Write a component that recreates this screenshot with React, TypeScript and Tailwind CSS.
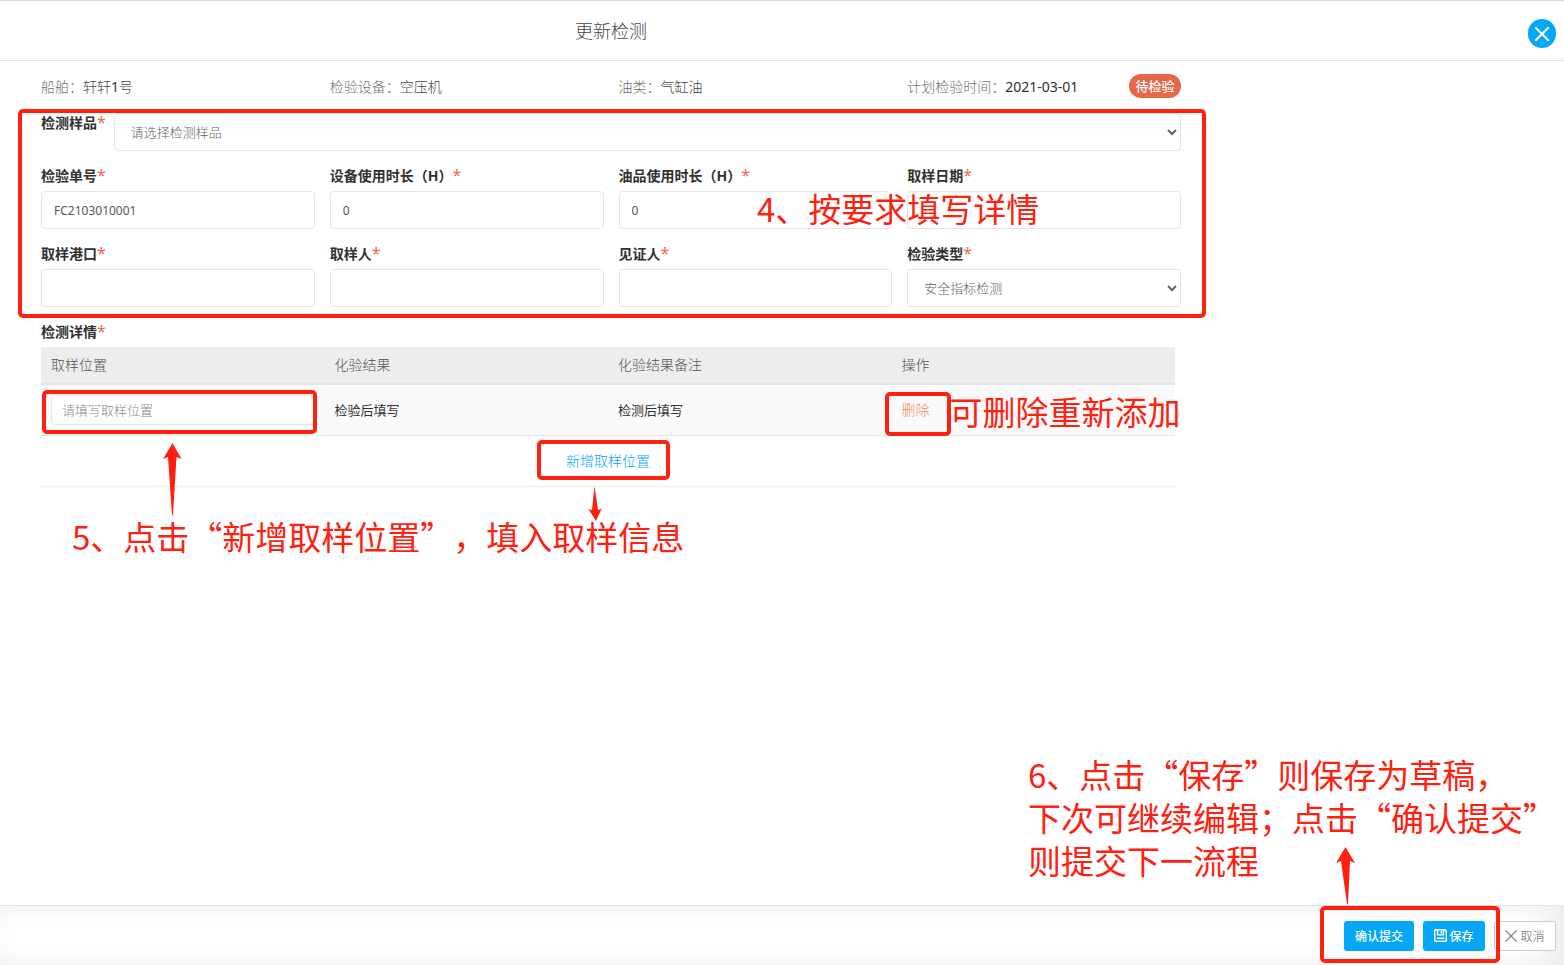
import type { ReactNode } from "react";

const RED = "#ff2010";

function Star() {
  return <span className="text-base leading-none font-normal text-[#e9694a]">*</span>;
}

function Info({ label, value }: { label: string; value: ReactNode }) {
  return (
    <div className="text-sm leading-5 whitespace-nowrap">
      <span className="font-light text-[#707070]">{label}：</span>
      {value}
    </div>
  );
}

function Field({ id, label, children }: { id: string; label: string; children: ReactNode }) {
  return (
    <div className="flex min-w-0 flex-col gap-[5px]">
      <label htmlFor={id} className="h-5 text-sm leading-5 font-bold whitespace-nowrap text-[#313131]">
        {label}
        <Star />
      </label>
      {children}
    </div>
  );
}

function TextField({ id, label, value = "" }: { id: string; label: string; value?: string }) {
  return (
    <Field id={id} label={label}>
      <input
        id={id}
        type="text"
        defaultValue={value}
        className="h-[38px] w-full rounded border border-[#e6e6e6] bg-white px-3 text-xs text-[#565656] outline-none"
      />
    </Field>
  );
}

function Arrow({ className, width, height, points }: { className: string; width: number; height: number; points: string }) {
  return (
    <svg aria-hidden="true" width={width} height={height} viewBox={`0 0 ${width} ${height}`} className={`pointer-events-none absolute ${className}`}>
      <polygon points={points} fill={RED} />
    </svg>
  );
}

function Frame({ className }: { className: string }) {
  return <div className={`pointer-events-none absolute rounded-[5px] border-4 border-[#ff2010] ${className}`} />;
}

function Note({ className, children }: { className: string; children: ReactNode }) {
  return (
    <p className={`pointer-events-none absolute font-['Noto_Sans_CJK_SC',sans-serif] text-[33px] leading-[43px] font-normal whitespace-nowrap text-[#ff2010] [text-spacing-trim:space-all] ${className}`}>
      {children}
    </p>
  );
}

export default function App() {
  return (
    <div lang="zh-CN" className="flex min-h-screen flex-col overflow-x-hidden bg-white font-['Noto_Sans','Noto_Sans_CJK_SC',sans-serif]">
      <header className="relative h-[61px] border-t border-b border-t-[#d6d8dc] border-b-[#e2e3e5] pl-[41px]">
        <h1 className="max-w-[1140px] text-center text-lg leading-[60px] font-light text-[#444]">更新检测</h1>
        <button type="button" aria-label="关闭" className="absolute top-[18px] right-2 flex h-[29px] w-7 items-center justify-center rounded-full bg-[#05a8f4]">
          <svg width="14" height="14" viewBox="0 0 14 14" stroke="#fff" strokeWidth="2" strokeLinecap="round">
            <path d="M1 1l12 12M13 1L1 13" />
          </svg>
        </button>
      </header>

      <main className="flex-1 pl-[41px]">
        <div className="max-w-[1140px]">
          <section className="grid h-[52px] grid-cols-4 items-center gap-x-[15px]">
            <Info label="船舶" value={<span className="font-light text-[#444]">轩轩<span className="font-normal text-[#313131]">1</span>号</span>} />
            <Info label="检验设备" value={<span className="font-light text-[#444]">空压机</span>} />
            <Info label="油类" value={<span className="font-light text-[#444]">气缸油</span>} />
            <div className="flex items-center justify-between">
              <Info label="计划检验时间" value={<span className="text-[#313131]">2021-03-01</span>} />
              <span className="mb-0.5 h-6 w-[52px] rounded-full bg-[#e66849] text-center text-[13px] leading-6 font-medium whitespace-nowrap text-white">待检验</span>
            </div>
          </section>

          <section className="relative flex flex-col gap-[15px]">
            <div className="flex items-start gap-2">
              <label htmlFor="sample" className="h-5 shrink-0 text-sm leading-5 font-bold text-[#313131]">
                检测样品
                <Star />
              </label>
              <select id="sample" className="h-[38px] min-w-0 flex-1 rounded border border-[#e6e6e6] bg-white pl-3 text-[13px] font-light text-[#666]">
                <option>请选择检测样品</option>
              </select>
            </div>
            <div className="grid grid-cols-4 gap-[15px]">
              <TextField id="number" label="检验单号" value="FC2103010001" />
              <TextField id="device-hours" label="设备使用时长（H）" value="0" />
              <TextField id="oil-hours" label="油品使用时长（H）" value="0" />
              <TextField id="date" label="取样日期" />
              <TextField id="port" label="取样港口" />
              <TextField id="sampler" label="取样人" />
              <TextField id="witness" label="见证人" />
              <Field id="kind" label="检验类型">
                <select id="kind" className="h-[38px] w-full rounded border border-[#e6e6e6] bg-white pl-3 text-[13px] font-light text-[#666]">
                  <option>安全指标检测</option>
                </select>
              </Field>
            </div>
            <Frame className="-top-1 -right-[25px] -bottom-[11px] -left-[23px]" />
            <Note className="top-[74px] left-[716px]">4、按要求填写详情</Note>
          </section>

          <section className="relative mt-[15px] pr-1.5">
            <h2 className="mb-[5px] h-5 text-sm leading-5 font-bold text-[#313131]">
              检测详情
              <Star />
            </h2>
            <table className="w-full table-fixed border-collapse text-left">
              <thead>
                <tr className="h-[37px] border-b-2 border-[#e3e6e9] bg-[#ededed] text-sm leading-5 text-[#555]">
                  <th className="px-2.5 font-light">取样位置</th>
                  <th className="px-2.5 font-light">化验结果</th>
                  <th className="px-2.5 font-light">化验结果备注</th>
                  <th className="px-2.5 font-light">操作</th>
                </tr>
              </thead>
              <tbody className="text-[13px] leading-5 text-[#313131]">
                <tr className="h-[51px] border-b border-[#e5e7e9] bg-[#fafafa]">
                  <td className="relative px-2.5">
                    <input
                      type="text"
                      aria-label="取样位置"
                      placeholder="请填写取样位置"
                      className="block h-[30px] w-full rounded border border-[#e6e6e6] bg-white px-2.5 text-[13px] font-light outline-none placeholder:text-[#888]"
                    />
                    <Frame className="top-[5px] right-2 bottom-px left-px" />
                  </td>
                  <td className="px-2.5">检验后填写</td>
                  <td className="px-2.5">检测后填写</td>
                  <td className="relative px-2.5">
                    <button type="button" className="block text-sm leading-5 font-light text-[#f58a6b]">删除</button>
                    <Frame className="top-[7px] -bottom-px -left-[7px] w-[66px]" />
                    <Note className="top-[5px] left-[58px]">可删除重新添加</Note>
                  </td>
                </tr>
                <tr className="h-[51px] border-b border-[#ebebeb]">
                  <td colSpan={4} className="text-center">
                    <span className="relative inline-block">
                      <button type="button" className="block text-sm leading-5 font-light text-[#05a8f4]">新增取样位置</button>
                      <Frame className="-top-[11px] -right-5 -bottom-[9px] -left-[29px]" />
                      <Arrow
                        className="top-[35px] left-[22px]"
                        width={14}
                        height={35}
                        points="6.5,0 10,24 13.5,23 8,35 0.5,23 4,24"
                      />
                    </span>
                  </td>
                </tr>
              </tbody>
            </table>
            <Arrow className="top-[121px] left-[122px]" width={19} height={72} points="9.5,0 18.5,16 13.5,14 10,72 9,72 5,14 0,16" />
            <Note className="top-[193px] left-[31px]">5、点击“新增取样位置”，填入取样信息</Note>
          </section>
        </div>
      </main>

      <footer className="relative flex h-[60px] items-center justify-end gap-[9px] border-t border-[#e2e3e5] pr-2 text-xs shadow-[inset_-14px_0_28px_rgba(0,0,0,0.08)]">
        <button type="button" className="h-[30px] w-[70px] rounded-[3px] bg-[#05a8f4] pt-0.5 font-medium text-white">确认提交</button>
        <button type="button" className="flex h-[30px] w-[62px] items-center justify-center gap-0.5 rounded-[3px] bg-[#05a8f4] font-medium text-white">
          <svg width="13" height="13" viewBox="0 0 13 13" fill="none" stroke="#fff" strokeWidth="1.4">
            <path d="M1.2 .7h9.6l1.5 1.5v9.6l-.5 .5H1.2l-.5-.5V1.2zM3.6 .7v5.2h5.8V.7M7.3 2v2.4M2.8 9.3h7.4" />
          </svg>
          <span className="pt-0.5">保存</span>
        </button>
        <button type="button" className="flex h-[30px] w-[62px] items-center justify-center gap-[3px] rounded-[3px] border border-[#ccc] bg-white font-light text-[#666]">
          <svg width="12" height="12" viewBox="0 0 12 12" fill="none" stroke="#808080" strokeWidth="1.1">
            <path d="M.5 .5l11 11M11.5 .5L.5 11.5" />
          </svg>
          <span className="pt-0.5">取消</span>
        </button>
        <Frame className="top-0 right-16 bottom-0.5 w-[180px]" />
        <Arrow className="right-[209px] bottom-[61px]" width={19} height={57} points="9.5,0 19,16 14,14 12,57 11,57 5,14 0,16" />
        <Note className="right-2 bottom-[83px]">
          6、点击“保存”则保存为草稿，
          <br />
          下次可继续编辑；点击“确认提交”
          <br />
          则提交下一流程
        </Note>
      </footer>
    </div>
  );
}
